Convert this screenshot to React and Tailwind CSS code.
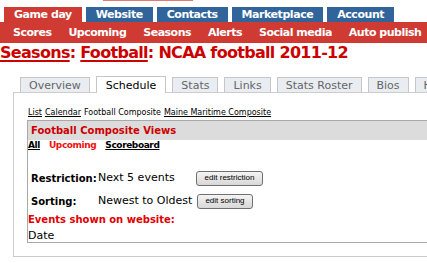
export default function App() {
  const font = { fontFamily: '"DejaVu Sans", Verdana, sans-serif' };
  const topTabs = [
    { label: "Game day", active: true },
    { label: "Website" },
    { label: "Contacts" },
    { label: "Marketplace" },
    { label: "Account" },
  ];
  const sub = ["Scores", "Upcoming", "Seasons", "Alerts", "Social media", "Auto publish"];
  const tabs = ["Overview", "Schedule", "Stats", "Links", "Stats Roster", "Bios", "History"];
  return (
    <div className="w-[427px] h-[263px] overflow-hidden bg-white text-black" style={font}>
      <div className="ml-[103px] w-[90px] h-px bg-[#e07a74]" />
      <div className="flex gap-[4px] pl-[4px] mt-[6px] h-[15px] whitespace-nowrap">
        {topTabs.map((t) => (
          <div
            key={t.label}
            className={`px-[10px] h-[15px] flex items-center text-[11px] font-bold text-white leading-none tracking-[-0.45px] ${t.active ? "bg-[#cf3a33]" : "bg-[#30649a]"}`}
          >
            {t.label}
          </div>
        ))}
      </div>
      <div className="h-[21px] bg-[#cf3a33] flex items-center gap-[17px] pl-[13px] whitespace-nowrap text-[11px] font-bold text-white leading-none tracking-[-0.5px]">
        {sub.map((s) => (
          <span key={s}>{s}</span>
        ))}
      </div>
      <div className="h-[20px] flex items-center text-[16px] font-bold text-[#cc0000] whitespace-nowrap leading-none tracking-[-0.7px]">
        <span className="underline decoration-[2px] underline-offset-[2px]">Seasons</span>
        <span>:&nbsp;</span>
        <span className="underline decoration-[2px] underline-offset-[2px]">Football</span>
        <span>: NCAA football 2011-12</span>
      </div>
      <div className="mt-[13px] flex items-end gap-[6px] pl-[20px] h-[16px] whitespace-nowrap">
        {tabs.map((t) =>
          t === "Schedule" ? (
            <div
              key={t}
              className="h-[17px] -mb-px px-[9px] flex items-center bg-white border border-b-0 border-[#c6c6c6] text-[11px] text-black leading-none z-10"
            >
              {t}
            </div>
          ) : (
            <div
              key={t}
              className="h-[15px] px-[8px] flex items-center bg-[#e9edf1] border border-b-0 border-[#c6c6c6] text-[11px] text-[#666] leading-none"
            >
              {t}
            </div>
          )
        )}
      </div>
      <div className="ml-[13px] border-t border-l border-b border-[#cccccc] h-[165px] pl-[13px] pt-[15px]">
        <div className="flex gap-[3px] text-[8px] leading-[10px] whitespace-nowrap pl-[1px]">
          <span className="underline">List</span>
          <span className="underline">Calendar</span>
          <span>Football Composite</span>
          <span className="underline">Maine Maritime Composite</span>
        </div>
        <div className="mt-[2px] border-t border-l border-b border-[#a9a9a9] h-[123px]">
          <div className="h-[19px] bg-[#dcdcdc] flex items-center pl-[3px] text-[10px] font-bold text-[#cc0000] leading-none">
            Football Composite Views
          </div>
          <div className="flex gap-[9px] text-[9px] font-bold leading-[11px] whitespace-nowrap tracking-[-0.4px]">
            <span className="underline">All</span>
            <span className="text-[#ee1111]">Upcoming</span>
            <span className="underline">Scoreboard</span>
          </div>
          <div className="mt-[19px] flex items-center h-[16px] pl-[3px] whitespace-nowrap">
            <span className="w-[67px] text-[10px] font-bold">Restriction:</span>
            <span className="w-[98px] text-[11px]">Next 5 events</span>
            <button className="h-[15px] w-[67px] rounded-[3px] border border-[#707070] bg-gradient-to-b from-[#f4f4f4] to-[#d8d8d8] text-[8px] leading-none text-black" style={{ fontFamily: '"Liberation Sans", Arial, sans-serif' }}>
              edit restriction
            </button>
          </div>
          <div className="mt-[7px] flex items-center h-[16px] pl-[3px] whitespace-nowrap">
            <span className="w-[67px] text-[10px] font-bold">Sorting:</span>
            <span className="w-[99px] text-[11px]">Newest to Oldest</span>
            <button className="h-[15px] w-[56px] rounded-[3px] border border-[#707070] bg-gradient-to-b from-[#f4f4f4] to-[#d8d8d8] text-[8px] leading-none text-black" style={{ fontFamily: '"Liberation Sans", Arial, sans-serif' }}>
              edit sorting
            </button>
          </div>
          <div className="mt-[4px] text-[10px] font-bold text-[#e00000] leading-[14px]">Events shown on website:</div>
          <div className="mt-[2px] text-[11px] leading-[14px]">Date</div>
        </div>
      </div>
    </div>
  );
}
